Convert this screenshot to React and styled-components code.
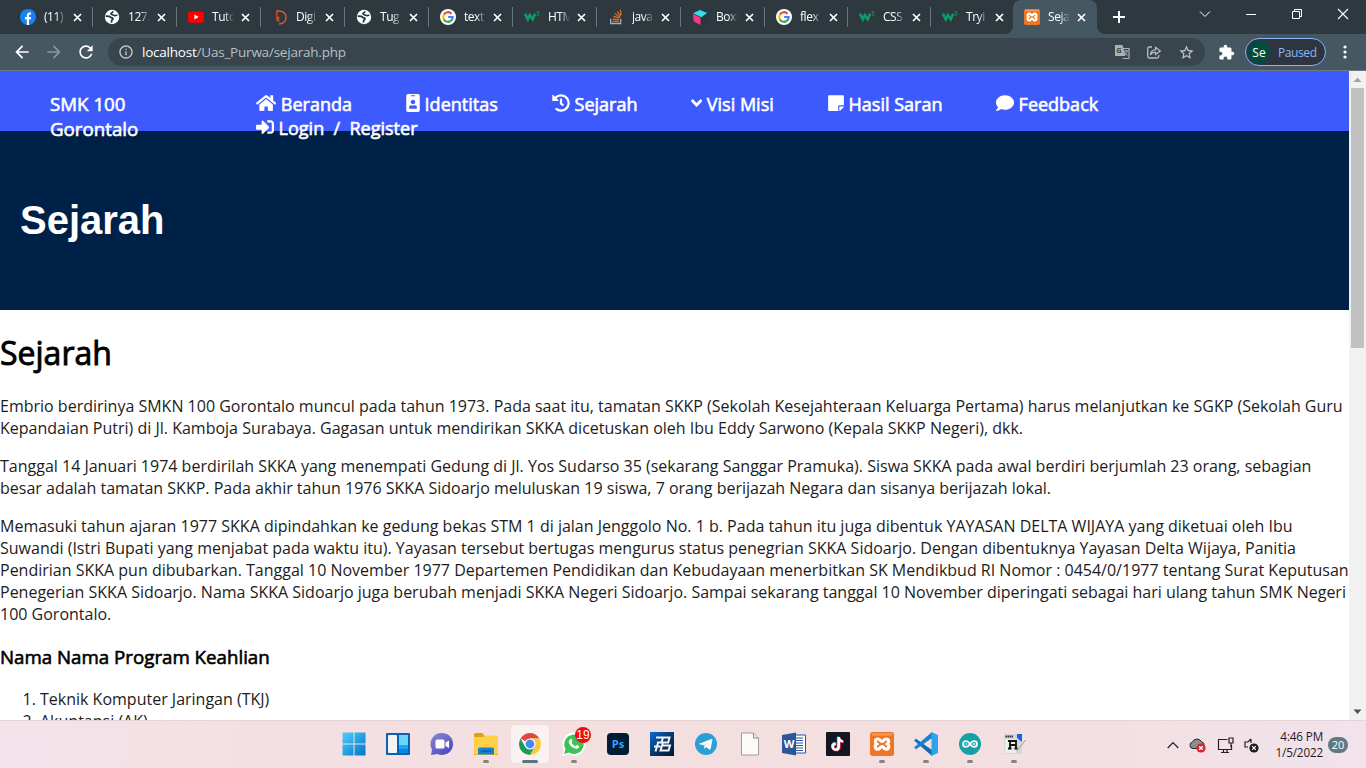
import React from "react";
import styled, { createGlobalStyle, css } from "styled-components";
import {
  FaHome, FaIdBadge, FaHistory, FaAngleDown, FaStickyNote, FaComment, FaSignInAlt,
} from "react-icons/fa";
import { MdExtension, MdStarBorder, MdRefresh, MdArrowBack, MdArrowForward, MdInfoOutline } from "react-icons/md";

const Global = createGlobalStyle`
  * { box-sizing: border-box; }
  html, body { margin: 0; padding: 0; overflow: hidden; }
  svg { display: block; flex: none; }
`;
const ui = css`font-family: "Open Sans", "Noto Sans", sans-serif;`;

const Screen = styled.div`
  width: 1366px; height: 768px; display: flex; flex-direction: column;
  overflow: hidden; background: #fff;
`;

/* ---------- browser frame ---------- */
const TabStrip = styled.div`
  height: 34px; flex: none; display: flex; padding-left: 9px;
  background: #2e393f; color: #fff; ${ui}
`;
const Tab = styled.div`
  width: ${(p) => p.$w}px; height: 34px; flex: none; display: flex; align-items: center;
  padding-left: 11px; position: relative; border-radius: 8px 8px 0 0;
  background: ${(p) => (p.$active ? "#455761" : "transparent")};
  &::after {
    content: ""; position: absolute; right: 0; top: 7px; width: 1px; height: 20px;
    background: ${(p) => (p.$line ? "#69757c" : "transparent")};
  }
`;
const TabTitle = styled.span`
  width: 24px; margin-left: 8px; white-space: nowrap;
  font-size: 12px; line-height: 18px; letter-spacing: -0.45px;
  -webkit-mask-image: linear-gradient(90deg, #000 50%, transparent 92%);
`;
const TabClose = styled.svg`margin-left: 5px;`;
const TabFoot = styled.svg`position: absolute; bottom: 0; ${(p) => (p.$left ? "left: -8px;" : "right: -8px;")}`;
const NewTab = styled.svg`margin: 11px 0 0 16px;`;
const Caption = styled.div`
  margin-left: auto; display: flex; align-items: center; height: 28px;
  gap: 34px; padding-right: 17px;
`;
const Toolbar = styled.div`
  height: 37px; flex: none; display: flex; align-items: center;
  background: #455761; border-bottom: 1px solid #70797f; color: #fff; ${ui}
`;
const NavButtons = styled.div`display: flex; gap: 12px; width: 108px; padding-left: 12px;`;
const Omnibox = styled.div`
  width: 1097px; height: 28px; border-radius: 14px; background: #38454d;
  display: flex; align-items: center; padding: 0 10px 0 10px; color: #c3c8cb;
`;
const Url = styled.span`
  margin-left: 8px; font-size: 13.5px; line-height: 20px; white-space: nowrap; color: #b8bfc3;
  letter-spacing: -0.22px;
  b { font-weight: 400; color: #fff; }
`;
const OmniActions = styled.div`margin-left: auto; display: flex; gap: 16px;`;
const Extensions = styled.div`margin-left: 13px; color: #fff;`;
const Profile = styled.div`
  width: 81px; height: 28px; margin-left: 10px; border: 1px solid #8ab4f8;
  border-radius: 14px; background: #2f3540; display: flex; align-items: center;
  color: #8ab4f8; font-size: 12px; letter-spacing: -0.4px; padding-left: 2px;
`;
const Avatar = styled.span`
  width: 22px; height: 22px; border-radius: 50%; background: #004d40; color: #fff;
  display: flex; align-items: center; justify-content: center; margin-right: 8px;
  font-size: 12px; letter-spacing: 0;
`;
const Kebab = styled.svg`margin-left: 17px;`;

/* ---------- web page ---------- */
const Viewport = styled.div`height: 649px; flex: none; display: flex; overflow: hidden;`;
const Page = styled.main`
  width: 1349px; height: 649px; overflow: hidden; color: #000;
  font-family: "Open Sans", sans-serif;
`;
const bolded = css`font-weight: 400; -webkit-text-stroke: 0.6px currentColor;`;
const SiteNav = styled.nav`
  height: 60px; background: #3d5afe; color: #fff; display: flex;
  padding: 20px 0 0 50px; position: relative;
  font-size: 18px; line-height: 25px; ${bolded}
`;
const Brand = styled.div`width: 206px; font-size: 18.72px;`;
const Menu = styled.div`padding-top: 1px; line-height: 24px;`;
const MenuRow = styled.div`display: flex; height: 24px; white-space: pre;`;
const MenuLink = styled.a`
  display: flex; width: ${(p) => p.$w}px; gap: 4.6px;
  svg { margin-top: 2px; stroke-width: 0; }
`;
const Hero = styled.header`
  height: 179px; background: #002147; display: flex; align-items: center; padding: 0 0 2px 20px;
  color: #fff; font: bold 40px/46px "Liberation Sans", Arial, sans-serif;
`;
const H1 = styled.h1`
  margin: 21px 0; font-size: 32px; line-height: 43px; ${bolded}
  -webkit-text-stroke-width: 0.9px;
`;
const H3 = styled.h3`margin: 19px 0 18px; font-size: 18.72px; line-height: 26px; ${bolded}`;
const Paragraph = styled.p`margin: 0 0 16px; font-size: 16px; line-height: 22px; color: #1c1c1c;`;
const Line = styled.span`display: block; white-space: nowrap;`;
const List = styled.ol`margin: 0; padding-left: 40px; font-size: 16px; line-height: 22px; color: #1c1c1c;`;

const Scrollbar = styled.div`
  width: 17px; background: #f1f1f1; display: flex; flex-direction: column; align-items: center;
`;
const ScrollArrow = styled.svg`margin: ${(p) => (p.$down ? "auto 0 0" : "0")};`;
const Thumb = styled.div`width: 13px; height: 260px; background: #c1c1c1;`;

/* ---------- taskbar ---------- */
const Taskbar = styled.footer`
  height: 48px; flex: none; display: flex; border-top: 1px solid #e6d3d5;
  background: linear-gradient(90deg, #f3e4ec 0, #f3e0e2 18%, #f3dfdf 60%, #f3e0e3 82%, #f1e3ec 100%);
  padding-left: 332px; ${ui} color: #1c1c1c;
`;
const Slot = styled.div`
  width: 44px; height: 46px; display: flex; align-items: center; justify-content: center; position: relative;
`;
const Tile = styled.div`
  width: 38px; height: 38px; border-radius: 4px; display: flex; align-items: center; justify-content: center;
  background: ${(p) => (p.$on ? "#faf2f1" : "transparent")};
  box-shadow: ${(p) => (p.$on ? "0 0 1px #d8c5c5" : "none")};
`;
const Running = styled.i`
  position: absolute; bottom: 4px; width: ${(p) => (p.$wide ? 16 : 6)}px; height: 3px;
  border-radius: 2px; background: ${(p) => (p.$wide ? "#5d7480" : "#8b8180")};
`;
const Count = styled.span`
  position: absolute; left: 23px; top: 6px; width: 16px; height: 16px; border-radius: 50%;
  background: #f00c0c; color: #fff; font: 12px/16px "Liberation Sans", sans-serif; text-align: center;
`;
const Tray = styled.div`margin-left: auto; display: flex; align-items: center; padding-right: 18px;`;
const TrayIcon = styled.div`margin-right: ${(p) => p.$r}px;`;
const Clock = styled.div`
  width: 61px; text-align: right; font-size: 11.7px; line-height: 16px; letter-spacing: -0.15px;
  margin: -2px 5px 0 0; white-space: nowrap;
`;
const Notify = styled.div`
  width: 20px; height: 16px; border-radius: 8px; background: #607985; color: #fff;
  font-size: 11px; line-height: 16px; text-align: center;
`;

/* ---------- drawings ---------- */
const Facebook = () => (
  <svg width="16" height="16" viewBox="0 0 16 16"><circle cx="8" cy="8" r="8" fill="#1682f0" />
    <path d="M6.8 16v-5.6H4.9V8.1h1.9V6.5c0-2 1.1-3 2.8-3 .8 0 1.5.1 1.5.1v1.9h-.9c-.9 0-1.2.5-1.2 1.1v1.5H11l-.3 2.3H9V16z" fill="#fff" /></svg>
);
const Globe = () => (
  <svg width="16" height="16" viewBox="0 0 16 16"><circle cx="8" cy="8" r="7.200" fill="#fff" />
    <path d="M2.400 7.200l2.800.2c1.300.2 1.300 1.500 2.600 1.500 1.500 0 1.500 1.300.5 1.900-.9.500-.8 1.300-.8 2.200" fill="none" stroke="#27343a" strokeWidth="1.700" strokeLinecap="round" />
    <path d="M8.800 2.800c-.2 1-1.800.8-1.900 2 0 1 1.500.9 2.300 1.300.9.500 2.600.6 3.600.2" fill="none" stroke="#27343a" strokeWidth="1.600" strokeLinecap="round" /></svg>
);
const Youtube = () => (
  <svg width="16" height="16" viewBox="0 0 16 16"><rect y="2.4" width="16" height="11.4" rx="2.8" fill="#f00" /><path d="M6.4 5.6v5L10.7 8z" fill="#fff" /></svg>
);
const DTab = () => (
  <svg width="16" height="16" viewBox="0 0 16 16" fill="none" strokeWidth="1.5"><path d="M4.800 1v8.500c0 1.300.5 2.200 1.700 2.700V7.500" stroke="#c94a2a" />
    <path d="M5 2c5.500-.5 9 2 9 6.200 0 3.800-2.800 6.300-7 6.800" stroke="#e3572f" /></svg>
);
const Google = () => (
  <svg width="16" height="16" viewBox="0 0 16 16"><circle cx="8" cy="8" r="8" fill="#fff" /><g fill="none" strokeWidth="2.1">
    <path d="M3.900 5.600A4.700 4.700 0 0 1 11.500 4.700" stroke="#ea4335" /><path d="M4.100 5.400a5 5 0 0 0 0 5.200" stroke="#fbbc05" />
    <path d="M3.900 10.400a4.700 4.700 0 0 0 7.300 1.200" stroke="#34a853" /><path d="M8.100 8h4.600c0 1.500-.6 2.800-1.600 3.600" stroke="#4285f4" /></g></svg>
);
const W3 = () => (
  <svg width="16" height="16" viewBox="0 0 17 16" fill="none" stroke="#0e9c67"><path d="M1 4.500l3.100 6 2.200-4.500 2.900 4.500 2.700-6" strokeWidth="2.700" />
    <path d="M13.400 2.600h2.500l-1.200 1.500c1.600.1 1.500 2.200-.2 2.200-.7 0-1.100-.3-1.300-.7" strokeWidth="1" /></svg>
);
const Stack = () => (
  <svg width="16" height="16" viewBox="0 0 16 16" fill="none"><path d="M2.700 9.800v4.700h10V9.800" stroke="#a9b0b3" strokeWidth="1.300" />
    <path d="M4.500 12.400h6.500M4.600 10l6.400.8M5.300 7.200l6 2M7 4.500l5 3.600M9.300 2.300l3.500 4.800M12.300.6l1 5.400" stroke="#e0691c" strokeWidth="1.300" /></svg>
);
const Cube = () => (
  <svg width="16" height="16" viewBox="0 0 16 16"><path d="M1 4.300L8 1l7 3-5.500 4.300z" fill="#2fe0e6" /><path d="M1 5l7.500 3.600V16L1.500 12.300z" fill="#ff3385" /><path d="M9.300 9l4.800-3.600v5.800L9.300 16z" fill="#28363e" /></svg>
);
const Xampp = ({ size = 16 }) => (
  <svg width={size} height={size} viewBox="0 0 24 24"><rect width="24" height="24" rx="2.500" fill="#ee7623" /><rect x="1.500" y="1.200" width="21" height="2.300" rx="1" fill="#f49a5b" />
    <path d="M8 7c-3.200 0-3.500 3.500-1.300 5-2.200 1.500-1.900 5.200 1.300 5.200 2.200 0 2.200-2.700 4-2.700s1.800 2.700 4 2.700c3.200 0 3.500-3.700 1.300-5.200C19.500 10.500 19.200 7 16 7c-2.200 0-2.200 2.500-4 2.500S10.200 7 8 7z" fill="none" stroke="#fff" strokeWidth="3.200" /></svg>
);

const tabs = [
  ["(11)", Facebook, 84], ["127.", Globe, 84], ["Tuto", Youtube, 84], ["Digi", DTab, 84], ["Tug", Globe, 84],
  ["text", Google, 84], ["HTM", W3, 84], ["java", Stack, 84], ["Boxi", Cube, 84], ["flex", Google, 83],
  ["CSS", W3, 83], ["Tryi", W3, 82], ["Seja", Xampp, 84],
];

const menu = [
  [FaHome, "Beranda", 150, 20.25], [FaIdBadge, "Identitas", 146, 14], [FaHistory, "Sejarah", 139, 18],
  [FaAngleDown, "Visi Misi", 137, 11.25], [FaStickyNote, "Hasil Saran", 168, 16], [FaComment, "Feedback", 120, 18],
];

const paragraphs = [
  ["Embrio berdirinya SMKN 100 Gorontalo muncul pada tahun 1973. Pada saat itu, tamatan SKKP (Sekolah Kesejahteraan Keluarga Pertama) harus melanjutkan ke SGKP (Sekolah Guru",
    "Kepandaian Putri) di Jl. Kamboja Surabaya. Gagasan untuk mendirikan SKKA dicetuskan oleh Ibu Eddy Sarwono (Kepala SKKP Negeri), dkk."],
  ["Tanggal 14 Januari 1974 berdirilah SKKA yang menempati Gedung di Jl. Yos Sudarso 35 (sekarang Sanggar Pramuka). Siswa SKKA pada awal berdiri berjumlah 23 orang, sebagian",
    "besar adalah tamatan SKKP. Pada akhir tahun 1976 SKKA Sidoarjo meluluskan 19 siswa, 7 orang berijazah Negara dan sisanya berijazah lokal."],
  ["Memasuki tahun ajaran 1977 SKKA dipindahkan ke gedung bekas STM 1 di jalan Jenggolo No. 1 b. Pada tahun itu juga dibentuk YAYASAN DELTA WIJAYA yang diketuai oleh Ibu",
    "Suwandi (Istri Bupati yang menjabat pada waktu itu). Yayasan tersebut bertugas mengurus status penegrian SKKA Sidoarjo. Dengan dibentuknya Yayasan Delta Wijaya, Panitia",
    "Pendirian SKKA pun dibubarkan. Tanggal 10 November 1977 Departemen Pendidikan dan Kebudayaan menerbitkan SK Mendikbud RI Nomor : 0454/0/1977 tentang Surat Keputusan",
    "Penegerian SKKA Sidoarjo. Nama SKKA Sidoarjo juga berubah menjadi SKKA Negeri Sidoarjo. Sampai sekarang tanggal 10 November diperingati sebagai hari ulang tahun SMK Negeri",
    "100 Gorontalo."],
];

const Svg24 = ({ children }) => <svg width="24" height="24" viewBox="0 0 24 24">{children}</svg>;

const Windows = () => (
  <Svg24><defs><linearGradient id="win" x2="1" y2="1"><stop stopColor="#4fd0fa" /><stop offset="1" stopColor="#0072ce" /></linearGradient></defs>
    <path d="M.5.500h11v11H.5zM12.500.500h11v11h-11zM.5 12.500h11v11H.5zM12.500 12.500h11v11h-11z" fill="url(#win)" /></Svg24>
);
const Widgets = () => (
  <Svg24><rect y="1" width="24" height="22" rx="1" fill="#0b62b4" /><rect x="2" y="3" width="9" height="18" rx="1" fill="#f5f5f4" />
    <path d="M13 3h9v10h-9z" fill="#69d6ff" /><path d="M13 13h9v4h-9z" fill="#1aa6f5" /><path d="M13 17h9v4h-9z" fill="#0a84e6" /></Svg24>
);
const Chat = () => (
  <Svg24><defs><linearGradient id="chat" x2=".7" y2="1"><stop stopColor="#8d8bd0" /><stop offset="1" stopColor="#4b4cc0" /></linearGradient></defs>
    <path d="M12 1a11 11 0 1 1-4.500 21L1 23l1-5.500A11 11 0 0 1 12 1z" fill="url(#chat)" /><rect x="5.500" y="7.500" width="9" height="9" rx="1.500" fill="#fff" /><path d="M15.500 10.500l3.500-2v7.500l-3.500-2z" fill="#fff" /></Svg24>
);
const Explorer = () => (
  <Svg24><path d="M0 2.500Q0 1 1.500 1h7l2 3H24v19H0z" fill="#e0a012" /><path d="M0 5h9l2-1.500h11.500Q24 3.500 24 5v16q0 1.500-1.500 1.500h-21Q0 22.500 0 21z" fill="#ffd048" />
    <path d="M4 22.500V17q0-1.500 1.500-1.500h13Q20 15.500 20 17v5.500z" fill="#1681d2" /><path d="M7 18.500h10v1.300H7z" fill="#0c5ca5" /></Svg24>
);
const Chrome = () => (
  <Svg24><circle cx="12" cy="12" r="11" fill="#fff" /><path d="M12 12L2.500 6.500A11 11 0 0 1 21.500 6.500H12z" fill="#e0483e" /><path d="M12 6.500h9.500A11 11 0 0 1 12 23l4.800-8.200z" fill="#fbc840" />
    <path d="M2.500 6.500A11 11 0 0 0 12 23l4.800-8.300L12 12l-4.800 2.700z" fill="#1b9a59" /><circle cx="12" cy="12" r="5.500" fill="#fff" /><circle cx="12" cy="12" r="4.400" fill="#4688f4" /></Svg24>
);
const WhatsApp = () => (
  <Svg24><path d="M0 24l1.800-6.300A11.600 11.600 0 1 1 6.500 22.300z" fill="#fff" /><path d="M2 22l1.500-5A9.700 9.700 0 1 1 7 20.600z" fill="#3bc355" />
    <path d="M8.500 7c.7-.4 1-.2 1.300.5l.7 1.700c.1.600-.8 1.200-.8 1.600.6 1.400 2 2.700 3.500 3.300.5 0 1-1.200 1.600-1.200l2 1c.5.300.3 1.200-.1 1.800-1.200 1.600-3.500 1.200-5.500.1-2.200-1.300-3.800-3.200-4.300-5C6.500 9 7.500 7.500 8.500 7z" fill="#fff" /></Svg24>
);
const Photoshop = () => (
  <Svg24><rect x="1" y="1" width="22" height="22" rx="4" fill="#001d33" /><text x="12" y="15.800" textAnchor="middle" fontFamily="Open Sans, sans-serif" fontWeight="700" fontSize="11" fill="#31a8ff">Ps</text></Svg24>
);
const PointBlank = () => (
  <Svg24><defs><linearGradient id="pb" x2="1" y2="1"><stop stopColor="#0a6cd6" /><stop offset=".5" stopColor="#07396f" /><stop offset="1" stopColor="#04142e" /></linearGradient></defs>
    <path d="M0 0h24v24H0z" fill="url(#pb)" /><path d="M6 5.500h13.500l-1.300 5H7M13 5.500l-1.500 5M4 14.500h6.500M8 11l-2.500 8.500M12 13.500h8L18.500 18.500h-8L13 10.500" fill="none" stroke="#f2f4f7" strokeWidth="2" /></Svg24>
);
const Telegram = () => (
  <Svg24><circle cx="12" cy="12" r="11" fill="#2a9fd8" /><path d="M4.500 12L17.500 7c.7-.2 1 .2.900.8l-1.800 9.200c-.2.700-.7.800-1.200.5L12.200 15l-1.800 1.800-.6-3.500z" fill="#fff" /><path d="M9.800 13.300l5.500-4.300-4.300 4.800-.6 3z" fill="#b6dbef" /></Svg24>
);
const Document = () => (
  <Svg24><path d="M3.500 1h12l5 5v17h-17z" fill="#fbfaf9" stroke="#a09c9b" /><path d="M15.500 1v5h5" fill="#e8e5e4" stroke="#8d8988" /></Svg24>
);
const Word = () => (
  <Svg24><path d="M13 3h10.500v18H13z" fill="#fff" stroke="#2b579a" /><path d="M14 6h7M14 8.500h7M14 11h7M14 13.500h7M14 16h7M14 18.500h7" stroke="#2b579a" />
    <path d="M0 3l14-2.500v23L0 21z" fill="#2b579a" /><text x="7" y="16.200" textAnchor="middle" fontFamily="Open Sans, sans-serif" fontWeight="700" fontSize="11" fill="#fff">W</text></Svg24>
);
const Note = ({ c, x, y }) => <path transform={`translate(${x} ${y})`} d="M12.800 5v9.500a3 3 0 1 1-3-3M12.800 5c.3 2.500 1.700 4 4.200 4.200" fill="none" stroke={c} strokeWidth="2.300" />;
const TikTok = () => (
  <Svg24><rect width="24" height="24" rx="1" fill="#141521" /><Note c="#25f4ee" x={-0.8} y={-0.3} /><Note c="#fe2c55" x={0.8} y={0.8} /><Note c="#fff" x={0} y={0.2} /></Svg24>
);
const VSCode = () => (
  <Svg24><path d="M0 8.500l2-1.700L18 18v6z" fill="#0e6fb6" /><path d="M0 15.500l2 1.700L18 6V0z" fill="#1484cc" /><path d="M17.500 0L24 3v18l-6.500 3z" fill="#2ba5ea" /></Svg24>
);
const Arduino = () => (
  <Svg24><circle cx="12" cy="12" r="11" fill="#17a0a5" /><path d="M12 12c-1.500-2.200-2.500-3-4-3a3 3 0 0 0 0 6c1.500 0 2.500-.8 4-3s2.500-3 4-3a3 3 0 0 1 0 6c-1.500 0-2.500-.8-4-3z" fill="none" stroke="#fff" strokeWidth="1.700" /><path d="M6.700 12h2.600M14.700 12h2.600M16 10.700v2.600" stroke="#fff" strokeWidth=".9" /></Svg24>
);
const Writer = () => (
  <Svg24><path d="M2 2h18v20H2z" fill="#d5d8da" /><path d="M3 7h11v14H3z" fill="#eceded" /><path d="M15 2h5v8l-5-4z" fill="#1462e8" /><path d="M3.500 4.500h7.500" stroke="#333" strokeWidth="2" strokeDasharray="1.500 .5" />
    <path d="M8 16.500V9h6v7.500M8 13h6M6 9h6M6 16.500h3.500M12.500 16.500h3" fill="none" stroke="#111" strokeWidth="1.800" /><path d="M23.500 8L15 19" stroke="#999" /></Svg24>
);

const apps = [
  { Icon: Windows }, { Icon: Widgets }, { Icon: Chat }, { Icon: Explorer, run: true }, { Icon: Chrome, run: true, on: true },
  { Icon: WhatsApp, run: true, count: 19 }, { Icon: Photoshop }, { Icon: PointBlank }, { Icon: Telegram }, { Icon: Document },
  { Icon: Word }, { Icon: TikTok }, { Icon: () => <Xampp size={24} />, run: true }, { Icon: VSCode, run: true },
  { Icon: Arduino, run: true }, { Icon: Writer, run: true },
];

export default function App() {
  return (
    <Screen>
      <Global />
      <TabStrip>
        {tabs.map(([title, Icon, w], i) => {
          const active = i === 12;
          return (
            <Tab key={i} $w={w} $active={active} $line={i < 11}>
              {active && <TabFoot $left width="8" height="8"><path d="M8 0v8H0a8 8 0 0 0 8-8z" fill="#455761" /></TabFoot>}
              <Icon />
              <TabTitle>{title}</TabTitle>
              <TabClose width="9" height="9" viewBox="0 0 9 9"><path d="M1 1l7 7M8 1L1 8" stroke="#fff" strokeWidth="1.700" /></TabClose>
              {active && <TabFoot width="8" height="8"><path d="M0 0v8h8a8 8 0 0 1-8-8z" fill="#455761" /></TabFoot>}
            </Tab>
          );
        })}
        <NewTab width="12" height="12" viewBox="0 0 12 12"><path d="M6 0v12M0 6h12" stroke="#fff" strokeWidth="2" /></NewTab>
        <Caption>
          <svg width="12" height="12" viewBox="0 0 12 12"><path d="M1 3.500l5 5 5-5" fill="none" stroke="#fff" /></svg>
          <svg width="12" height="12" viewBox="0 0 12 12"><path d="M1 6.500h10" stroke="#fff" /></svg>
          <svg width="12" height="12" viewBox="0 0 12 12" fill="none" stroke="#fff"><path d="M1.500 3.500h7v7h-7zM3.500 3.500v-2h7v7h-2" /></svg>
          <svg width="12" height="12" viewBox="0 0 12 12"><path d="M1 1l10 10M11 1L1 11" stroke="#fff" strokeWidth="1.100" /></svg>
        </Caption>
      </TabStrip>
      <Toolbar>
        <NavButtons>
          <MdArrowBack size={20} />
          <MdArrowForward size={20} color="#8b979d" />
          <MdRefresh size={20} />
        </NavButtons>
        <Omnibox>
          <MdInfoOutline size={16} />
          <Url><b>localhost</b>/Uas_Purwa/sejarah.php</Url>
          <OmniActions>
            <svg width="16" height="16" viewBox="0 0 16 16"><path d="M6.500 4.500H15v10H8.500" fill="none" stroke="#aab1b5" strokeWidth="1.200" /><path d="M1 1h7.500l3 11H1z" fill="#aab1b5" /><text x="2.200" y="9" fontFamily="Open Sans, sans-serif" fontSize="7.500" fontWeight="700" fill="#38454d">G</text><path d="M9.500 7h4.500M12 6v1M13.200 7c-.3 2-1.500 3.200-2.500 4M10.500 8.500l3 3" stroke="#aab1b5" fill="none" /></svg>
            <svg width="16" height="16" viewBox="0 0 16 16" fill="none" stroke="#b4bbbf" strokeWidth="1.300"><path d="M6 3H3.200C2.300 3 1.700 3.600 1.700 4.500v8c0 .9.600 1.500 1.500 1.500h8c.9 0 1.500-.6 1.500-1.500V11" /><path d="M4.500 10.500c.3-3 2-4.500 5-4.700V3.200L14.300 7l-4.800 3.600V8.200c-2 0-3.600.6-5 2.300z" strokeLinejoin="round" /></svg>
            <MdStarBorder size={17} />
          </OmniActions>
        </Omnibox>
        <Extensions><MdExtension size={17} /></Extensions>
        <Profile><Avatar>Se</Avatar>Paused</Profile>
        <Kebab width="4" height="14" viewBox="0 0 4 14" fill="#fff"><circle cx="2" cy="2" r="1.600" /><circle cx="2" cy="7" r="1.600" /><circle cx="2" cy="12" r="1.600" /></Kebab>
      </Toolbar>

      <Viewport>
        <Page>
          <SiteNav>
            <Brand>SMK 100<br />Gorontalo</Brand>
            <Menu>
              <MenuRow>
                {menu.map(([Icon, label, w, iw]) => (
                  <MenuLink key={label} $w={w}><Icon style={{ width: iw, height: 18 }} />{label}</MenuLink>
                ))}
              </MenuRow>
              <MenuRow>
                <MenuLink $w={77.500}><FaSignInAlt size={18} />Login</MenuLink>
                <MenuLink $w={16}>/</MenuLink>
                <MenuLink $w={80}>Register</MenuLink>
              </MenuRow>
            </Menu>
          </SiteNav>
          <Hero>Sejarah</Hero>
          <H1>Sejarah</H1>
          {paragraphs.map((lines, i) => (
            <Paragraph key={i}>{lines.map((l) => <Line key={l}>{l}</Line>)}</Paragraph>
          ))}
          <H3>Nama Nama Program Keahlian</H3>
          <List>
            <li>Teknik Komputer Jaringan (TKJ)</li>
            <li>Akuntansi (AK)</li>
          </List>
        </Page>
        <Scrollbar>
          <ScrollArrow width="17" height="17"><path d="M4.500 11h8l-4-4.500z" fill="#a3a3a3" /></ScrollArrow>
          <Thumb />
          <ScrollArrow $down width="17" height="17"><path d="M4.500 6.500h8l-4 4.500z" fill="#505050" /></ScrollArrow>
        </Scrollbar>
      </Viewport>

      <Taskbar>
        {apps.map(({ Icon, run, on, count }, i) => (
          <Slot key={i}>
            <Tile $on={on}><Icon /></Tile>
            {run && <Running $wide={on} />}
            {count && <Count>{count}</Count>}
          </Slot>
        ))}
        <Tray>
          <TrayIcon $r={10}><svg width="12" height="8" viewBox="0 0 12 8"><path d="M.7 7L6 1.500 11.300 7" fill="none" stroke="#222" strokeWidth="1.200" /></svg></TrayIcon>
          <TrayIcon $r={11}><svg width="17" height="16" viewBox="0 0 17 16"><path d="M4 11.500a3.300 3.300 0 0 1-.5-6.500 5 5 0 0 1 9-.3 3.500 3.500 0 0 1 2.500 4v2.800z" fill="#8e8e8e" stroke="#222" /><circle cx="12" cy="11" r="4.600" fill="#d9252f" /><path d="M10.200 9.200l3.600 3.600M13.800 9.200l-3.600 3.600" stroke="#fff" strokeWidth="1.300" /></svg></TrayIcon>
          <TrayIcon $r={9}><svg width="17" height="18" viewBox="0 0 17 18" fill="none" stroke="#222" strokeWidth="1.200"><path d="M10.500 3.500h-9v10h13V9M4 16.500h8M6.500 13.500v3M10 13.500v3M12 2h4v5h-4zM14 7v4" /></svg></TrayIcon>
          <TrayIcon $r={3}><svg width="16" height="16" viewBox="0 0 16 16"><path d="M8 2L4.800 5H2v5h3M8 2v4" fill="none" stroke="#222" strokeWidth="1.200" /><circle cx="11" cy="11" r="4.600" fill="#1c1c1c" /><path d="M9.200 9.200l3.600 3.600M12.800 9.200l-3.600 3.600" stroke="#fff" strokeWidth="1.200" /></svg></TrayIcon>
          <Clock>4:46 PM<br />1/5/2022</Clock>
          <Notify>20</Notify>
        </Tray>
      </Taskbar>
    </Screen>
  );
}
